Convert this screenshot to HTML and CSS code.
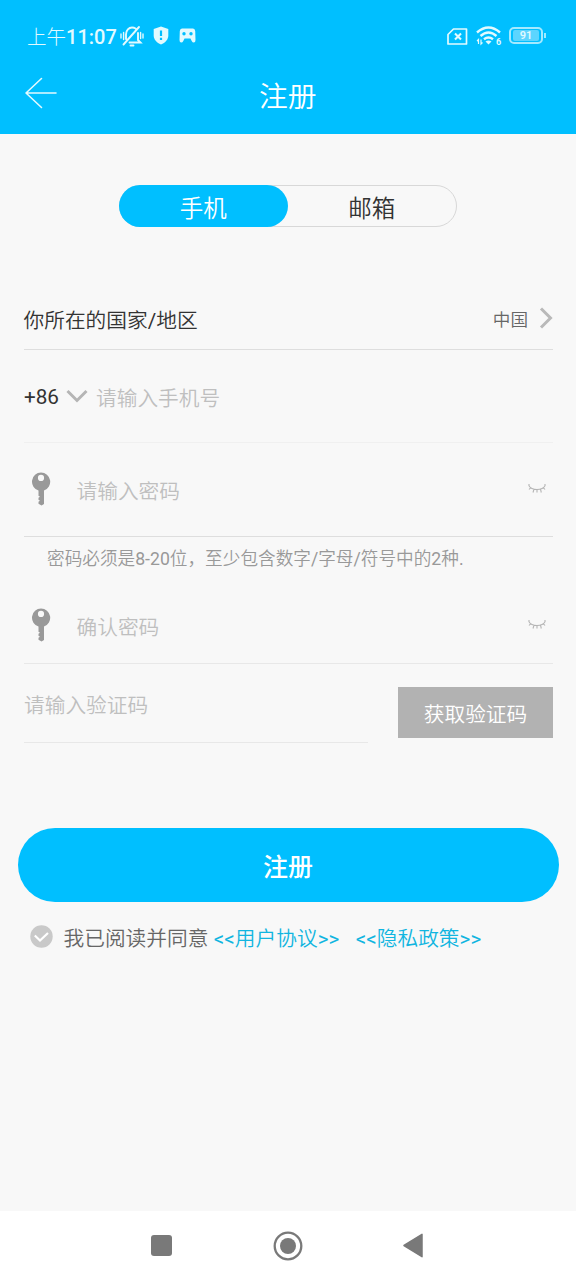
FILE: index.html
```html
<!DOCTYPE html>
<html lang="zh-CN">
<head>
<meta charset="utf-8">
<title>注册</title>
<link rel="stylesheet" href="styles.css">
</head>
<body>
<div class="screen">
  <header class="header">
    <div class="status">
      <div class="status-left">
        <span class="time">上午<b>11:07</b></span>
        <svg class="mute" width="24" height="22" viewBox="0 0 24 22" fill="none" stroke="currentColor" stroke-width="1.9" stroke-linecap="round"><path d="M6 14V9.500C6 5 9 2.500 12 2.500q2 0 3.500 1M18 8v7l2.500 2.500H9.500M3.500 19.500 19 2M10.500 20.500h3"/><path d="M1 9v4M3.600 7.500v7M20.600 7.500v6M23 9v4" stroke-width="1.400"/></svg>
        <svg class="shield" width="16" height="19" viewBox="0 0 16 19"><path fill="currentColor" d="M8 .5 15.300 3v6.500c0 4-3 7.200-7.300 9-4.300-1.800-7.300-5-7.300-9V3Z"/><path d="M8 4.500v5.500M8 11.800v2.200" stroke="#00bfff" stroke-width="2.200"/></svg>
        <svg class="game" width="17" height="15" viewBox="0 0 17 15"><path fill="currentColor" d="M3 .5h11Q16 .5 16.200 3l.3 9q0 2.500-1.800 2.500-1.200 0-2-1.500L11.500 10.500h-6L4.300 13q-.8 1.500-2 1.500-1.800 0-1.800-2.500L.8 3Q1 .5 3 .5Z"/><circle cx="5" cy="5.800" r="1.700" fill="#00bfff"/><circle cx="12" cy="5.800" r="1.700" fill="#00bfff"/></svg>
      </div>
      <div class="status-right">
        <svg width="21" height="17" viewBox="0 0 21 17" fill="none" stroke="currentColor" stroke-width="1.700"><path stroke-linejoin="round" d="M6.500 1h13v15H1V6.500Z"/><path stroke-width="2.100" d="m8 5.500 6 6m0-6-6 6"/></svg>
        <svg class="wifi" width="26" height="20" viewBox="0 0 26 20"><g fill="none" stroke="currentColor" stroke-width="2.400"><path d="M1 6.500q11.500-10 23 0M4.500 10q8-7 16 0M8 13.200q4.500-3.500 9 0"/></g><path fill="currentColor" d="m9.500 15.500q3-2 6 0L12.500 18.500Z"/><path d="M2.500 18v-4.500L1 15M5 13.500V18l1.500-1.500" fill="none" stroke="currentColor" stroke-width="1.200"/><text class="wifi-gen" x="20" y="18.500">6</text></svg>
        <div class="battery"><span class="battery-body"><span class="battery-level">91</span></span><span class="battery-tip"></span></div>
      </div>
    </div>
    <div class="titlebar">
      <svg class="back" width="34" height="32" viewBox="0 0 34 32" fill="none" stroke="currentColor" stroke-width="1.600" stroke-linecap="round" stroke-linejoin="round"><path d="M32 16H2M17.500 1.500 2 16l15.500 14.500"/></svg>
      <h1 class="title">注册</h1>
    </div>
  </header>

  <main class="main">
    <div class="tabs"><div class="tab tab-active">手机</div><div class="tab">邮箱</div></div>

    <section class="form">
      <div class="row row-country">
        <span class="label">你所在的国家<span class="latin">/</span>地区</span>
        <span class="country">中国</span>
        <svg class="chev-right" width="14" height="22" viewBox="0 0 14 22" fill="none" stroke="#b9b9b9" stroke-width="3"><path d="m2 1.500 9.500 9.500L2 20.500"/></svg>
      </div>
      <div class="row row-phone">
        <span class="code latin">+86</span>
        <svg class="chev-down" width="22" height="14" viewBox="0 0 22 14" fill="none" stroke="#b5b5b5" stroke-width="3"><path d="M1.500 2 11 11.500 20.500 2"/></svg>
        <span class="placeholder">请输入手机号</span>
      </div>
      <div class="row row-password">
        <svg class="key" width="20" height="34" viewBox="0 0 20 34"><path fill="#999" fill-rule="evenodd" d="M10 .5a9.200 9.200 0 0 1 3 17.900V32L10.500 33.500 7.500 31.800V29.800L9 28.800 7.500 27.800V25.800L9 24.800 7.500 23.800V18.500A9.200 9.200 0 0 1 10 .5ZM10 2.800a3.100 3.100 0 1 0 0 6.200 3.100 3.100 0 0 0 0-6.200Z"/></svg>
        <span class="placeholder">请输入密码</span>
        <svg class="eye" width="18" height="12" viewBox="0 0 18 12" fill="none" stroke="#b4b4b4" stroke-width="1.100"><path d="M.8 2.500Q3 6.500 9 6.500t8.200-4M2.800 4.500 1 6.500M6 6.200 5 9.500M9 6.500V9.500M12.500 6.200l.8 3.300M15.200 4.500 17 6.500M1 1v2M17 1v2"/></svg>
      </div>
      <p class="hint">密码必须是<span class="latin">8-20</span>位，至少包含数字<span class="latin">/</span>字母<span class="latin">/</span>符号中的<span class="latin">2</span>种<span class="latin">.</span></p>
      <div class="row row-confirm">
        <svg class="key" width="20" height="34" viewBox="0 0 20 34"><path fill="#999" fill-rule="evenodd" d="M10 .5a9.200 9.200 0 0 1 3 17.900V32L10.500 33.500 7.500 31.800V29.800L9 28.800 7.500 27.800V25.800L9 24.800 7.500 23.800V18.500A9.200 9.200 0 0 1 10 .5ZM10 2.800a3.100 3.100 0 1 0 0 6.200 3.100 3.100 0 0 0 0-6.200Z"/></svg>
        <span class="placeholder">确认密码</span>
        <svg class="eye" width="18" height="12" viewBox="0 0 18 12" fill="none" stroke="#b4b4b4" stroke-width="1.100"><path d="M.8 2.500Q3 6.500 9 6.500t8.200-4M2.800 4.500 1 6.500M6 6.200 5 9.500M9 6.500V9.500M12.500 6.200l.8 3.300M15.200 4.500 17 6.500M1 1v2M17 1v2"/></svg>
      </div>
      <div class="verify">
        <div class="row row-verify"><span class="placeholder">请输入验证码</span></div>
        <div class="get-code">获取验证码</div>
      </div>
    </section>

    <div class="submit">注册</div>
    <div class="agree">
      <svg class="check" width="23" height="23" viewBox="0 0 23 23"><circle cx="11.500" cy="11.500" r="11.200" fill="#c9c9c9"/><path d="m4.800 10.500 5.200 5 8-7.500" fill="none" stroke="#fff" stroke-width="2.200"/></svg>
      <span class="agree-text">我已阅读并同意</span>
      <span class="link"><span class="latin">&lt;&lt;</span>用户协议<span class="latin">&gt;&gt;</span></span>
      <span class="link link-privacy"><span class="latin">&lt;&lt;</span>隐私政策<span class="latin">&gt;&gt;</span></span>
    </div>
  </main>

  <nav class="nav">
    <svg width="21" height="21" viewBox="0 0 21 21"><rect width="21" height="21" rx="3" fill="#797979"/></svg>
    <svg width="30" height="30" viewBox="0 0 30 30"><circle cx="15" cy="15" r="13.300" fill="none" stroke="#797979" stroke-width="2.300"/><circle cx="15" cy="15" r="8" fill="#797979"/></svg>
    <svg width="20" height="25" viewBox="0 0 20 25"><path d="M1 12.500 19 1.300v22.400Z" fill="#797979" stroke="#797979" stroke-width="1.500" stroke-linejoin="round"/></svg>
  </nav>
</div>
</body>
</html>
```
FILE: styles.css
```css
* { box-sizing: border-box; }
body {
  margin: 0;
  font-family: Roboto, "Noto Sans CJK SC", sans-serif;
  font-size: 20.7px;
  font-weight: 350;
  color: #333;
}
svg { display: block; flex: none; }
span, .tab, .submit, .get-code { white-space: nowrap; }
.latin { font-weight: 400; }
.screen { width: 576px; height: 1280px; display: flex; flex-direction: column; background: #f8f8f8; }

.header { height: 134px; background: #00bfff; color: #e2faff; }
.status { height: 72px; display: flex; justify-content: space-between; padding: 0 30px 0 27px; }
.status-left, .status-right { display: flex; align-items: center; }
.time { padding-top: 2px; font-size: 19.5px; font-weight: 300; line-height: 24px; }
.time b { font-size: 20px; font-weight: 500; }
.mute { margin-left: 3px; margin-top: -1px; }
.shield { margin-left: 9px; margin-top: -2px; }
.game { margin-left: 10px; margin-top: -1px; }
.wifi { margin-left: 8px; }
.wifi-gen { font-size: 9px; font-weight: 700; fill: currentColor; }
.battery { display: flex; align-items: center; margin-left: 7px; margin-top: -2px; gap: 1px; }
.battery-body { width: 34px; height: 17px; padding: 1px 2px; border: 2px solid #a4e9ff; border-radius: 5px; }
.battery-level { display: block; height: 11px; background: #5cd5ff; border-radius: 2px; font-size: 11px; font-weight: 600; line-height: 12px; text-align: center; }
.battery-tip { width: 2px; height: 5px; background: #a0eaff; }
.titlebar { height: 62px; display: flex; padding-left: 24px; }
.back { margin-top: 5px; }
.title { margin: 5px 0 0 201px; font-size: 28.8px; font-weight: 350; line-height: 40px; color: #fff; }

.main { flex: 1; padding-top: 51px; }
.tabs { width: 338px; height: 42px; margin-left: 119px; display: flex; border: 1.500px solid #d8d8d8; border-radius: 21px; }
.tab { flex: 1; font-size: 23.5px; line-height: 46px; text-align: center; }
.tab-active { margin: -1px 0 -1px -1px; border-radius: 21px; background: #00bfff; color: #fff; line-height: 48px; }

.form { margin: 62px 23px 0 24px; }
.row { display: flex; align-items: center; border-bottom: 1px solid #dedede; }
.label { margin-left: -0.500px; }
.row-country { height: 61px; }
.country { margin: -2px 0 0 auto; font-size: 17.6px; color: #666; }
.chev-right { margin-left: 11px; margin-top: -3px; }
.row-phone { height: 93px; padding-top: 2px; border-bottom-color: #f0f0f0; }
.chev-down { margin: -3px 8px 0 7px; }
.placeholder { color: #bfbfbf; }
.row-password { height: 94px; }
.row-password .key, .row-password .eye { margin-top: -2px; }
.key { margin: 0 26px 0 7px; }
.row .key + .placeholder { margin-left: -0.500px; }
.eye { margin-left: auto; margin-right: 7px; }
.hint { margin: 10px 0 0 23px; font-size: 17.65px; line-height: 24px; color: #999; }
.row-confirm { height: 93px; padding-top: 18px; border-bottom-color: #e8e8e8; }
.row-confirm .key, .row-confirm .eye { margin-top: -2px; }
.verify { display: flex; justify-content: space-between; }
.row-verify { width: 344px; height: 79px; padding-top: 2px; border-bottom-color: #e8e8e8; }
.get-code { width: 155px; height: 51px; margin-top: 23px; background: #b2b2b2; color: #fff; line-height: 56px; text-align: center; }

.submit { height: 74px; margin: 85px 17.5px 0; border-radius: 37px; background: #00bfff; color: #fff; font-size: 25px; font-weight: 500; line-height: 80px; text-align: center; }
.agree { display: flex; align-items: center; height: 30px; margin-top: 20px; padding-left: 30px; }
.check { margin-top: -2px; }
.agree-text { margin-left: 10.5px; margin-right: 5.5px; color: #666; }
.link { color: #11b5e0; }
.link-privacy { margin-left: 16.5px; }

.nav { height: 69px; display: flex; align-items: center; justify-content: space-between; padding: 0 153px 0 151px; background: #fff; }
```
